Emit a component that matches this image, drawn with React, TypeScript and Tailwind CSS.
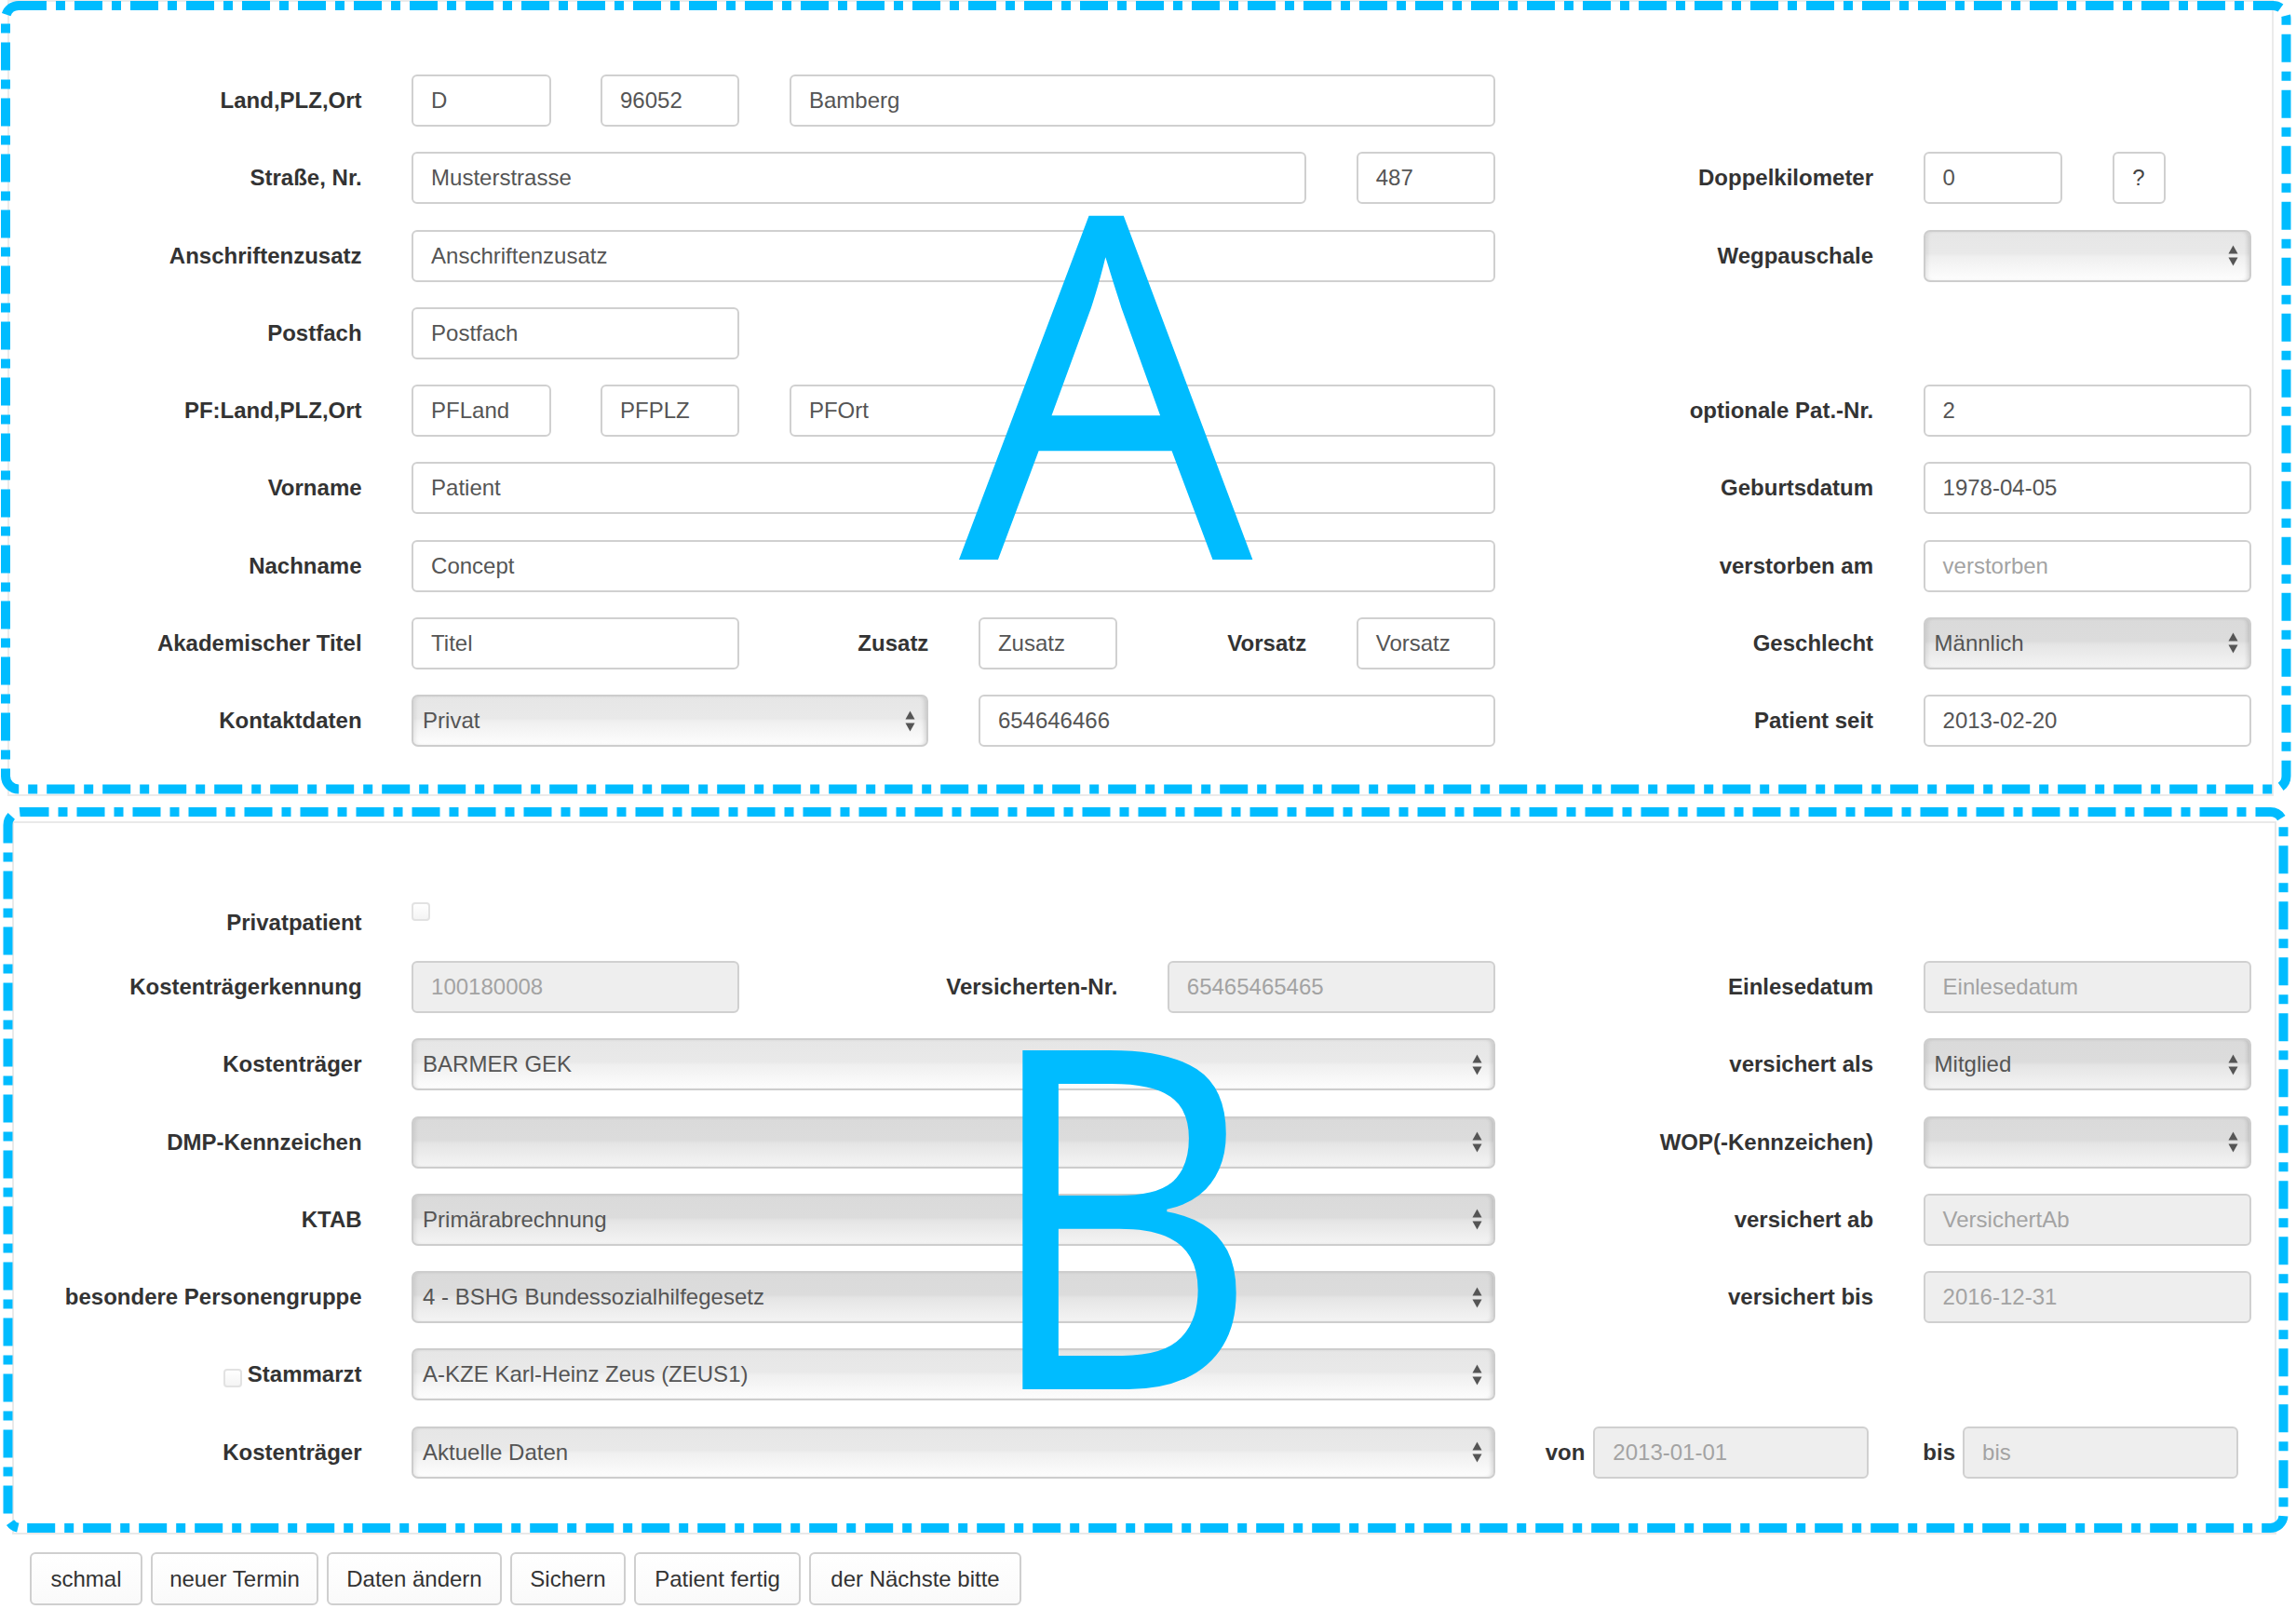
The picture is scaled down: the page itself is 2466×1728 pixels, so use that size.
import React from "react";

const ROW = "grid grid-cols-[repeat(12,149.45px)] gap-x-[53.5px] h-[56px] items-center";

const LIGHT =
  "bg-[linear-gradient(180deg,#e6e6e6_0%,#e9e9e9_45%,#f0f0f0_52%,#fdfdfd_100%)]";
const DARK =
  "bg-[linear-gradient(180deg,#dadada_0%,#dcdcdc_45%,#e5e5e5_52%,#f4f4f4_100%)]";

function Label({ cls, children }: { cls: string; children: React.ReactNode }) {
  return (
    <div className={`${cls} flex items-center justify-end text-right font-bold text-[24px] leading-none text-[#333] whitespace-nowrap`}>
      {children}
    </div>
  );
}

function Input({
  cls,
  value,
  tone = "normal",
}: {
  cls: string;
  value: string;
  tone?: "normal" | "placeholder" | "disabled";
}) {
  const bg = tone === "disabled" ? "bg-[#eeeeee]" : "bg-white";
  const color = tone === "normal" ? "text-[#555]" : "text-[#a3a3a3]";
  return (
    <div
      className={`${cls} ${bg} ${color} h-[56px] rounded-[6px] border-2 border-[#d0d0d0] px-[19px] flex items-center text-[24px] leading-none whitespace-nowrap overflow-hidden`}
    >
      {value}
    </div>
  );
}

function Arrows() {
  return (
    <svg width="11" height="23" viewBox="0 0 11 23" className="shrink-0">
      <polygon points="0.5,9.5 5.5,0.5 10.5,9.5" fill="#555" />
      <polygon points="0.5,13.5 10.5,13.5 5.5,22.5" fill="#555" />
    </svg>
  );
}

function Select({ cls, value, dark = false }: { cls: string; value: string; dark?: boolean }) {
  return (
    <div
      className={`${cls} ${dark ? DARK : LIGHT} h-[56px] rounded-[7px] border-2 border-[#cdcdcd] pl-[10px] pr-[12px] flex items-center justify-between text-[24px] leading-none text-[#555] whitespace-nowrap shadow-[inset_-4px_0_4px_-2px_rgba(0,0,0,0.13),inset_4px_0_4px_-2px_rgba(0,0,0,0.08)]`}
    >
      <span>{value}</span>
      <Arrows />
    </div>
  );
}

function Checkbox() {
  return (
    <div className="w-[20px] h-[20px] rounded-[4px] border-2 border-[#e2e2e2] bg-[linear-gradient(180deg,#ffffff,#f4f4f4)] shrink-0" />
  );
}

export default function App() {
  return (
    <div className="relative w-[2466px] h-[1728px] bg-white overflow-hidden font-['Liberation_Sans',Arial,sans-serif]">
      {/* Panel A */}
      <div className="ml-[8px] w-[2434px] h-[855px] border-2 border-[#ebebeb] pt-[78px] pl-[26.2px] flex flex-col gap-y-[27.25px]">
        <div className={ROW}>
          <Label cls="col-start-1 col-span-2">Land,PLZ,Ort</Label>
          <Input cls="col-start-3 col-span-1" value="D" />
          <Input cls="col-start-4 col-span-1" value="96052" />
          <Input cls="col-start-5 col-span-4" value="Bamberg" />
        </div>
        <div className={ROW}>
          <Label cls="col-start-1 col-span-2">Straße, Nr.</Label>
          <Input cls="col-start-3 col-span-5" value="Musterstrasse" />
          <Input cls="col-start-8 col-span-1" value="487" />
          <Label cls="col-start-9 col-span-2">Doppelkilometer</Label>
          <Input cls="col-start-11 col-span-1" value="0" />
          <div className="col-start-12 col-span-1 w-[57px] h-[56px] rounded-[6px] border-2 border-[#d0d0d0] bg-white flex items-center justify-center text-[24px] leading-none text-[#444]">
            ?
          </div>
        </div>
        <div className={ROW}>
          <Label cls="col-start-1 col-span-2">Anschriftenzusatz</Label>
          <Input cls="col-start-3 col-span-6" value="Anschriftenzusatz" />
          <Label cls="col-start-9 col-span-2">Wegpauschale</Label>
          <Select cls="col-start-11 col-span-2" value="" />
        </div>
        <div className={ROW}>
          <Label cls="col-start-1 col-span-2">Postfach</Label>
          <Input cls="col-start-3 col-span-2" value="Postfach" />
        </div>
        <div className={ROW}>
          <Label cls="col-start-1 col-span-2">PF:Land,PLZ,Ort</Label>
          <Input cls="col-start-3 col-span-1" value="PFLand" />
          <Input cls="col-start-4 col-span-1" value="PFPLZ" />
          <Input cls="col-start-5 col-span-4" value="PFOrt" />
          <Label cls="col-start-9 col-span-2">optionale Pat.-Nr.</Label>
          <Input cls="col-start-11 col-span-2" value="2" />
        </div>
        <div className={ROW}>
          <Label cls="col-start-1 col-span-2">Vorname</Label>
          <Input cls="col-start-3 col-span-6" value="Patient" />
          <Label cls="col-start-9 col-span-2">Geburtsdatum</Label>
          <Input cls="col-start-11 col-span-2" value="1978-04-05" />
        </div>
        <div className={ROW}>
          <Label cls="col-start-1 col-span-2">Nachname</Label>
          <Input cls="col-start-3 col-span-6" value="Concept" />
          <Label cls="col-start-9 col-span-2">verstorben am</Label>
          <Input cls="col-start-11 col-span-2" value="verstorben" tone="placeholder" />
        </div>
        <div className={ROW}>
          <Label cls="col-start-1 col-span-2">Akademischer Titel</Label>
          <Input cls="col-start-3 col-span-2" value="Titel" />
          <Label cls="col-start-5 col-span-1">Zusatz</Label>
          <Input cls="col-start-6 col-span-1" value="Zusatz" />
          <Label cls="col-start-7 col-span-1">Vorsatz</Label>
          <Input cls="col-start-8 col-span-1" value="Vorsatz" />
          <Label cls="col-start-9 col-span-2">Geschlecht</Label>
          <Select cls="col-start-11 col-span-2" value="Männlich" dark />
        </div>
        <div className={ROW}>
          <Label cls="col-start-1 col-span-2">Kontaktdaten</Label>
          <Select cls="col-start-3 col-span-3" value="Privat" />
          <Input cls="col-start-6 col-span-3" value="654646466" />
          <Label cls="col-start-9 col-span-2">Patient seit</Label>
          <Input cls="col-start-11 col-span-2" value="2013-02-20" />
        </div>
      </div>

      {/* Panel B */}
      <div className="mt-[27px] ml-[13px] w-[2432px] h-[766px] border-2 border-[#e9e9e9] pt-[78px] pl-[21.2px]">
        <div className={ROW}>
          <Label cls="col-start-1 col-span-2 pt-[2px]">Privatpatient</Label>
          <div className="col-start-3 col-span-1 self-start mt-[7px]">
            <Checkbox />
          </div>
        </div>
        <div className="mt-[14px] flex flex-col gap-y-[27.3px]">
          <div className={ROW}>
            <Label cls="col-start-1 col-span-2">Kostenträgerkennung</Label>
            <Input cls="col-start-3 col-span-2" value="100180008" tone="disabled" />
            <Label cls="col-start-5 col-span-2">Versicherten-Nr.</Label>
            <Input cls="col-start-7 col-span-2" value="65465465465" tone="disabled" />
            <Label cls="col-start-9 col-span-2">Einlesedatum</Label>
            <Input cls="col-start-11 col-span-2" value="Einlesedatum" tone="disabled" />
          </div>
          <div className={ROW}>
            <Label cls="col-start-1 col-span-2">Kostenträger</Label>
            <Select cls="col-start-3 col-span-6" value="BARMER GEK" />
            <Label cls="col-start-9 col-span-2">versichert als</Label>
            <Select cls="col-start-11 col-span-2" value="Mitglied" dark />
          </div>
          <div className={ROW}>
            <Label cls="col-start-1 col-span-2">DMP-Kennzeichen</Label>
            <Select cls="col-start-3 col-span-6" value="" dark />
            <Label cls="col-start-9 col-span-2">WOP(-Kennzeichen)</Label>
            <Select cls="col-start-11 col-span-2" value="" dark />
          </div>
          <div className={ROW}>
            <Label cls="col-start-1 col-span-2">KTAB</Label>
            <Select cls="col-start-3 col-span-6" value="Primärabrechnung" dark />
            <Label cls="col-start-9 col-span-2">versichert ab</Label>
            <Input cls="col-start-11 col-span-2" value="VersichertAb" tone="disabled" />
          </div>
          <div className={ROW}>
            <Label cls="col-start-1 col-span-2">besondere Personengruppe</Label>
            <Select cls="col-start-3 col-span-6" value="4 - BSHG Bundessozialhilfegesetz" dark />
            <Label cls="col-start-9 col-span-2">versichert bis</Label>
            <Input cls="col-start-11 col-span-2" value="2016-12-31" tone="disabled" />
          </div>
          <div className={ROW}>
            <div className="col-start-1 col-span-2 flex items-center justify-end gap-x-[6px]">
              <div className="mt-[8px]">
                <Checkbox />
              </div>
              <span className="font-bold text-[24px] leading-none text-[#333]">Stammarzt</span>
            </div>
            <Select cls="col-start-3 col-span-6" value="A-KZE Karl-Heinz Zeus (ZEUS1)" />
          </div>
          <div className={ROW}>
            <Label cls="col-start-1 col-span-2">Kostenträger</Label>
            <Select cls="col-start-3 col-span-6" value="Aktuelle Daten" />
            <div className="col-start-9 col-span-4 flex items-center">
              <span className="font-bold text-[24px] leading-none text-[#333]">von</span>
              <Input cls="ml-[9px] w-[296px]" value="2013-01-01" tone="disabled" />
              <span className="ml-[58px] font-bold text-[24px] leading-none text-[#333]">bis</span>
              <Input cls="ml-[8px] w-[296px]" value="bis" tone="disabled" />
            </div>
          </div>
        </div>
      </div>

      {/* Buttons */}
      <div className="mt-[19px] ml-[32px] flex gap-x-[9px]">
        {[
          ["schmal", "w-[121px]"],
          ["neuer Termin", "w-[180px]"],
          ["Daten ändern", "w-[188px]"],
          ["Sichern", "w-[124px]"],
          ["Patient fertig", "w-[179px]"],
          ["der Nächste bitte", "w-[228px]"],
        ].map(([t, w]) => (
          <div
            key={t}
            className={`${w} h-[57px] rounded-[6px] border-2 border-[#cfcfcf] bg-[linear-gradient(180deg,#ffffff,#fafafa)] flex items-center justify-center text-[24px] leading-none text-[#333] whitespace-nowrap`}
          >
            {t}
          </div>
        ))}
      </div>

      {/* Annotation overlay: dashed frames */}
      <svg
        className="absolute left-0 top-0 pointer-events-none"
        width="2466"
        height="1728"
        viewBox="0 0 2466 1728"
      >
        <rect
          x="6"
          y="6"
          width="2449.5"
          height="841.5"
          rx="14"
          fill="none"
          stroke="#00BCFF"
          strokeWidth="10"
          strokeDasharray="30 10 10 10"
        />
        <rect
          x="8.5"
          y="872"
          width="2444"
          height="769"
          rx="14"
          fill="none"
          stroke="#00BCFF"
          strokeWidth="10"
          strokeDasharray="30 10 10 10"
        />
      </svg>

      {/* Annotation letters */}
      <span className="absolute left-[1030px] top-[144px] origin-left scale-x-[0.97] font-['Open_Sans',sans-serif] font-medium text-[515px] leading-none text-[#00BCFF] pointer-events-none">
        A
      </span>
      <span className="absolute left-[1053px] top-[1039px] origin-left scale-x-[0.91] font-['Open_Sans',sans-serif] font-medium text-[510px] leading-none text-[#00BCFF] pointer-events-none">
        B
      </span>
    </div>
  );
}
